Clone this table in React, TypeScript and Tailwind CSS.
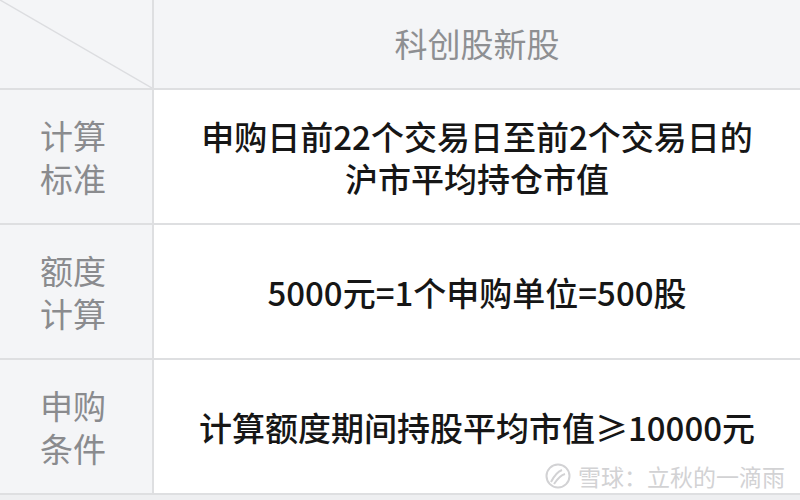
import React from "react";

const font = { fontFamily: '"Noto Sans CJK SC", "Noto Sans", sans-serif' };

function Row({ label, children }: { label: string[]; children: React.ReactNode }) {
  return (
    <div className="flex h-[135px] border-b-2 border-[#dedfe1]">
      <div className="w-[154px] shrink-0 bg-[#f4f5f7] border-r-2 border-[#dedfe1] flex flex-col items-center justify-center pr-[6px] text-[33px] leading-[43px] text-[#8a8b8e]">
        {label.map((l) => (
          <div key={l}>{l}</div>
        ))}
      </div>
      <div className="flex-1 bg-white flex flex-col items-center justify-center text-[33px] leading-[42px] text-[#161616] font-medium">
        {children}
      </div>
    </div>
  );
}

export default function App() {
  return (
    <div className="relative w-[800px] h-[500px] bg-[#eeeff1] overflow-hidden" style={font}>
      <div className="flex h-[90px] border-b-2 border-[#dedfe1]">
        <div className="relative w-[154px] shrink-0 bg-[#f4f5f7] border-r-2 border-[#dedfe1]">
          <svg className="absolute inset-0" width="152" height="88" viewBox="0 0 152 88">
            <line x1="0" y1="0" x2="152" y2="88" stroke="#dcdde0" strokeWidth="1.5" />
          </svg>
        </div>
        <div className="flex-1 bg-[#f4f5f7] flex items-center justify-center text-[33px] text-[#8e8f92]">
          科创股新股
        </div>
      </div>
      <Row label={["计算", "标准"]}>
        <div>申购日前22个交易日至前2个交易日的</div>
        <div>沪市平均持仓市值</div>
      </Row>
      <Row label={["额度", "计算"]}>
        <div>5000元=1个申购单位=500股</div>
      </Row>
      <Row label={["申购", "条件"]}>
        <div>计算额度期间持股平均市值≥10000元</div>
      </Row>
      <div className="absolute right-[15px] bottom-[11px] flex items-center gap-[7px] text-[23px] leading-none text-[#d2d2d4]">
        <svg width="26" height="26" viewBox="0 0 26 26" fill="none" stroke="#d2d2d4" strokeWidth="2">
          <circle cx="13" cy="13" r="11.5" />
          <path d="M6 19 C9 13, 12 9, 17 7" />
          <path d="M9 21 C13 15, 16 12, 20 11" />
        </svg>
        <span>雪球：立秋的一滴雨</span>
      </div>
    </div>
  );
}
